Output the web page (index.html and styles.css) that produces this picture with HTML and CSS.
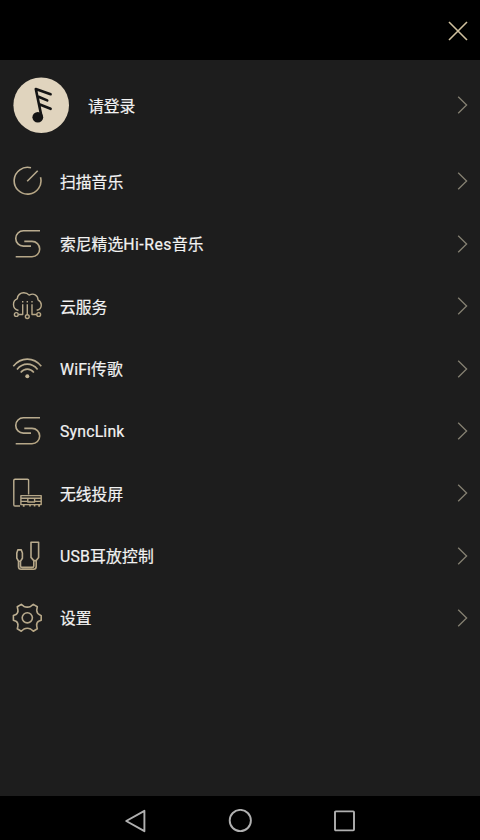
FILE: index.html
```html
<!DOCTYPE html>
<html lang="zh-CN">
<head>
<meta charset="utf-8">
<title>菜单</title>
<link rel="stylesheet" href="styles.css">
</head>
<body>
<svg width="0" height="0" class="defs">
  <defs>
    <linearGradient id="gold" gradientUnits="userSpaceOnUse" x1="0" y1="0" x2="30" y2="30"><stop offset="0" stop-color="#c4b595"/><stop offset=".5" stop-color="#b5a88c"/><stop offset="1" stop-color="#b7a47e"/></linearGradient>
    <symbol id="chevron" viewBox="0 0 12 20"><path d="M2.2 1.8 10.6 10 2.2 18.2"/></symbol>
    <symbol id="s-logo" viewBox="0 0 30 30"><path d="M28 1.8H11.4a7.65 7.65 0 0 0 0 15.3H19M12.3 12.4H20a7.7 7.7 0 0 1 0 15.4H3.7"/></symbol>
  </defs>
</svg>
<header class="top"><svg class="close" viewBox="0 0 20 20"><path d="M1 1 19 19M19 1 1 19"/></svg></header>
<main class="menu">
  <div class="row profile">
    <svg class="avatar" viewBox="0 0 56 56"><circle cx="28.2" cy="28.2" r="27.8"/><path d="M28.2 38 22.8 12 37.6 17.2M24.3 19.2 34.2 23.4M26.2 27.2 37.6 31.8"/><ellipse cx="24.8" cy="40.2" rx="5.4" ry="5.2" class="note"/></svg>
    <span class="label">请登录</span><svg class="chev"><use href="#chevron"/></svg>
  </div>
  <div class="row"><svg class="icon" viewBox="0 0 30 30"><path d="M19 1.8A13.4 13.4 0 1 0 28.5 11.2M15.2 15.2 25.7 4.8"/></svg><span class="label">扫描音乐</span><svg class="chev"><use href="#chevron"/></svg></div>
  <div class="row"><svg class="icon"><use href="#s-logo"/></svg><span class="label">索尼精选<span class="hires">Hi-Res</span>音乐</span><svg class="chev"><use href="#chevron"/></svg></div>
  <div class="row"><svg class="icon thin" viewBox="0 0 30 30"><path d="M6.5 19.5C3 18.5 1.5 16.3 1.5 13.4 1.5 10.4 3 8.5 5.2 7.8 5.8 4 8.5 1.7 11.8 1.7c2.3 0 4 .8 5.4 2.4C21.5 1.8 26 4 26 8.8c2.2 1.2 3.3 3 3.3 5.2 0 2.8-1.7 4.7-4.6 5.3M10.7 13.2V23.5H6.3M15.3 13.2V23.4M20 13.2V23.5H24.7M10.7 10v1.6M15.3 10v1.6M20 10v1.6"/><circle cx="4.3" cy="23.5" r="1.9"/><circle cx="15.3" cy="25.6" r="1.9"/><circle cx="26.7" cy="23.5" r="1.9"/></svg><span class="label">云服务</span><svg class="chev"><use href="#chevron"/></svg></div>
  <div class="row"><svg class="icon" viewBox="0 0 30 30"><path d="M1.3 12.2C9 2.8 21.6 2.8 29.3 12.2M5 15.4C10.8 8.4 19.8 8.4 25.6 15.4M8.7 18.5C12.5 14 18.1 14 21.9 18.5"/><circle class="dot" cx="15.3" cy="22.3" r="2"/></svg><span class="label wifi">WiFi传歌</span><svg class="chev"><use href="#chevron"/></svg></div>
  <div class="row"><svg class="icon"><use href="#s-logo"/></svg><span class="label sync">SyncLink</span><svg class="chev"><use href="#chevron"/></svg></div>
  <div class="row"><svg class="icon thin" viewBox="0 0 30 30"><path d="M16.6 16.6V2.4Q16.6 1.2 15.4 1.2H3Q1.8 1.2 1.8 2.4V26.8Q1.8 28 3 28H8M8.9 17.6H29.2V26.6H8.9ZM8.9 20.3H29.2M8.9 23.4H15.8M22.6 23.4H29.2M15.8 20.3V24H22.6V20.3M10.8 28h1.8M17.2 27.8h1.6M21.8 27.8h1.6M26.2 28h1.8"/></svg><span class="label">无线投屏</span><svg class="chev"><use href="#chevron"/></svg></div>
  <div class="row"><svg class="icon usb" viewBox="0 0 30 30"><path d="M19 1.2H26.6V16.4L24.2 19.6V25.5Q24.2 28.3 21.5 28.3H9Q6.5 28.3 6.5 25.5V20.2L4.8 17.2V12L5.8 8.9H9.3L10.4 12V17.2L8.5 20.2V24.7Q8.5 26.4 10.2 26.4H20Q21.8 26.4 21.8 24.7V19.6L19 16.4ZM6.5 20.2H8.5M21.8 19.6H24.2"/></svg><span class="label usb-label">USB耳放控制</span><svg class="chev"><use href="#chevron"/></svg></div>
  <div class="row"><svg class="icon" viewBox="0 0 30 30"><path d="M9.3 1.4 12 3.4Q15.3 4.8 18.6 3.4L21.3 1.4 25.3 3.8 24.7 7.2Q25 10.8 28 12L29.2 12.6V17.2L26.6 18.2Q24.2 20 24.7 22.8L25.3 25.8 21.3 28.2 18.6 26Q15.3 24.6 12 26L9.3 28.2 5.3 25.8 5.9 22.8Q6.4 20 4 18.2L1.4 17.2V12.6L4 11.6Q6.4 9.8 5.9 7.2L5.3 3.8Z"/><circle cx="15.3" cy="14.8" r="5.1"/></svg><span class="label">设置</span><svg class="chev"><use href="#chevron"/></svg></div>
</main>
<nav class="system">
  <svg viewBox="0 0 24 24"><path d="M2.2 12 20.4 1.8V22.2Z"/></svg>
  <svg viewBox="0 0 24 24"><circle cx="12.3" cy="11.5" r="10.6"/></svg>
  <svg viewBox="0 0 24 24"><rect x="3" y="2.4" width="19" height="19" rx=".8"/></svg>
</nav>
</body>
</html>
```
FILE: styles.css
```css
* { box-sizing: border-box; }
body {
  margin: 0;
  height: 840px;
  display: flex;
  flex-direction: column;
  overflow: hidden;
  background: #000;
  color: #f2f2f2;
  font: 15.8px/24px Roboto, "Noto Sans CJK SC", sans-serif;
}
svg { display: block; flex: none; fill: none; }
.defs { position: absolute; }
.top {
  height: 60px;
  padding: 1px 12px 0 0;
  display: flex;
  align-items: center;
  justify-content: flex-end;
}
.close { width: 20px; height: 20px; stroke: #d0c19f; stroke-width: 1.6; }
.menu { height: 735.5px; background: #1d1d1d; }
.row {
  height: 62.35px;
  padding: 0 12px;
  display: flex;
  align-items: center;
}
.profile { height: 90.3px; padding-left: 13px; }
.icon {
  width: 30px;
  height: 30px;
  stroke: url(#gold);
  stroke-width: 1.6;
  stroke-linejoin: round;
}
.thin { stroke-width: 1.4; }
.usb { stroke-width: 1.6; }
.dot { fill: #c4b595; stroke: none; }
.label {
  margin-left: 18px;
  padding-top: 3px;
  flex: 1;
  white-space: nowrap;
  -webkit-text-stroke: .2px #f2f2f2;
}
.hires { letter-spacing: .5px; }
.wifi { letter-spacing: .15px; }
.sync { letter-spacing: .2px; }
.usb-label { letter-spacing: .2px; }
.avatar { width: 56px; height: 56px; stroke: #141414; stroke-width: 2.6; stroke-linecap: round; stroke-linejoin: round; }
.avatar circle { fill: #e0d4be; stroke: none; }
.avatar .note { fill: #141414; stroke: none; }
.profile .label { margin-left: 19px; }
.chev { width: 12px; height: 20px; stroke: #858072; stroke-width: 1.3; }
.system {
  flex: 1;
  display: flex;
  justify-content: center;
  align-items: center;
  gap: 80px;
  padding-top: 6px;
}
.system svg { width: 24px; height: 24px; stroke: #b0b0b0; stroke-width: 1.9; stroke-linejoin: round; }
```
